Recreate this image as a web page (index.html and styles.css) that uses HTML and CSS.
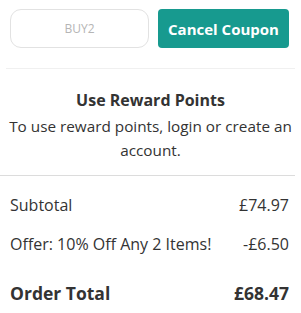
FILE: index.html
```html
<!DOCTYPE html>
<html>
<head>
<meta charset="utf-8">
<link rel="stylesheet" href="styles.css">
</head>
<body>
<div class="coupon">
  <div class="coupon-input">BUY2</div>
  <button class="cancel-btn">Cancel Coupon</button>
</div>
<div class="rule-light"></div>
<div class="reward">
  <div class="reward-title">Use Reward Points</div>
  <div class="reward-text">To use reward points, login or create an account.</div>
</div>
<div class="rule"></div>
<div class="totals">
  <div class="row"><span>Subtotal</span><span>£74.97</span></div>
  <div class="row"><span>Offer: 10% Off Any 2 Items!</span><span>-£6.50</span></div>
  <div class="row total"><span>Order Total</span><span>£68.47</span></div>
</div>
</body>
</html>
```
FILE: styles.css
```css
* { box-sizing: border-box; }
body {
  margin: 0;
  width: 301px;
  height: 313px;
  overflow: hidden;
  background: #fff;
  font-family: "Open Sans", "Noto Sans", sans-serif;
  color: #333;
}
.coupon {
  display: flex;
  gap: 9px;
  padding: 9px 12px 0 10px;
  height: 48px;
}
.coupon-input {
  width: 139px;
  height: 39px;
  border: 1px solid #e2e2e2;
  border-radius: 11px;
  display: flex;
  align-items: center;
  justify-content: center;
  font-size: 12px;
  color: #b5b5b5;
}
.cancel-btn {
  width: 131px;
  height: 39px;
  border: none;
  border-radius: 4px;
  background: #179a8f;
  color: #fff;
  font-family: inherit;
  font-weight: 700;
  font-size: 15px;
  padding: 0;
}
.rule-light {
  margin: 20px 6px 0 6px;
  height: 1px;
  background: #f0f0f0;
}
.reward {
  text-align: center;
  padding: 20px 2px 0;
  height: 106px;
}
.reward-title {
  font-weight: 700;
  font-size: 16px;
  line-height: 22px;
  margin-bottom: 3px;
}
.reward-text {
  font-size: 15.3px;
  line-height: 24px;
}
.rule {
  margin: 0 6px 0 0;
  height: 1px;
  background: #dcdcdc;
}
.totals {
  padding: 0 12px 0 10px;
}
.row {
  display: flex;
  justify-content: space-between;
  font-size: 16px;
  line-height: 20px;
  margin-top: 19px;
}
.row.total {
  font-weight: 700;
  font-size: 17.5px;
  margin-top: 29px;
}
```
